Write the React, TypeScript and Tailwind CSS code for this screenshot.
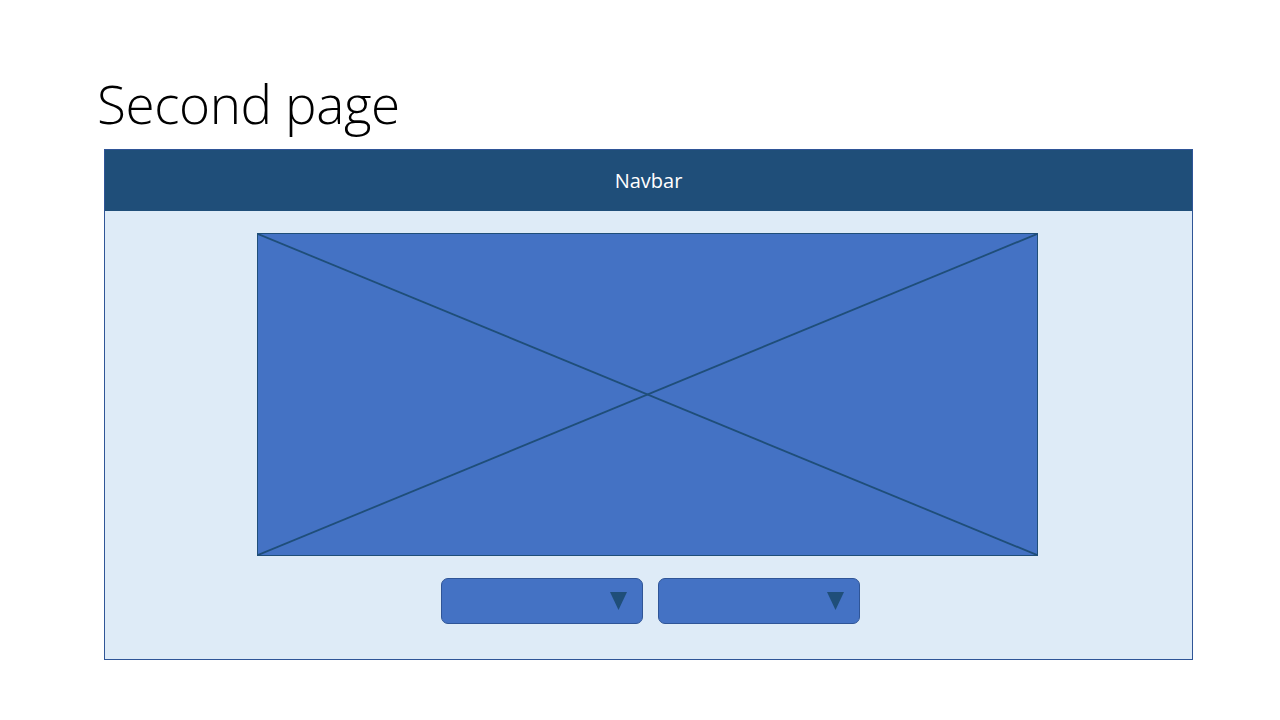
function Dropdown() {
  return (
    <div className="flex h-[46px] w-[202px] items-center justify-end rounded-[7px] border border-[#2f5597] bg-[#4472c4] pr-[15px]">
      <svg width="17" height="18" viewBox="0 0 17 18">
        <polygon points="0,0 17,0 8.5,18" fill="#1f4e79" />
      </svg>
    </div>
  )
}

export default function App() {
  return (
    <div className="h-[720px] w-[1280px] bg-white" style={{ fontFamily: '"Open Sans", "Liberation Sans", sans-serif' }}>
      <h1 className="pl-[97px] pt-[72px] text-[53px] leading-[64px] font-light tracking-[-0.4px] text-black">
        Second page
      </h1>
      <div className="ml-[104px] mt-[13px] w-[1089px] border border-[#2f5597] bg-[#deebf7]">
        <div className="flex h-[61px] items-center justify-center bg-[#1f4e79] text-[20px] text-white">
          Navbar
        </div>
        <div className="flex flex-col items-center pt-[22px] pb-[35px]">
          <div className="relative ml-[-3px] h-[323px] w-[781px] border border-[#1f4e79] bg-[#4472c4]">
            <svg className="absolute inset-0 h-full w-full" viewBox="0 0 779 321" preserveAspectRatio="none">
              <line x1="0" y1="0" x2="779" y2="321" stroke="#1f4e79" strokeWidth="1.8" />
              <line x1="779" y1="0" x2="0" y2="321" stroke="#1f4e79" strokeWidth="1.8" />
            </svg>
          </div>
          <div className="mt-[22px] ml-[4px] flex gap-[15px]">
            <Dropdown />
            <Dropdown />
          </div>
        </div>
      </div>
    </div>
  )
}
